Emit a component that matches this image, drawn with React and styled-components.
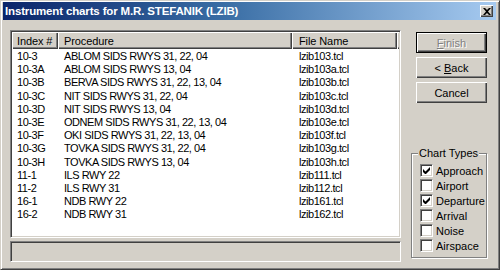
import React from "react";
import styled, { createGlobalStyle } from "styled-components";

const Global = createGlobalStyle`
  html, body { margin: 0; padding: 0; background: #d4d0c8; }
  body { font-family: "Liberation Sans", Arial, sans-serif; font-size: 11px; color: #000; }
`;

const Window = styled.div`
  width: 500px;
  height: 270px;
  box-sizing: border-box;
  background: #d4d0c8;
  border: 1px solid;
  border-color: #d4d0c8 #404040 #404040 #d4d0c8;
  box-shadow: inset 1px 1px 0 #fff, inset -1px -1px 0 #808080;
  padding: 1px 3px 0 2px;
  display: flex;
  flex-direction: column;
  overflow: hidden;
`;

const TitleBar = styled.div`
  height: 18px;
  background: linear-gradient(to right, #0a246a 0%, #3a6ea5 45%, #a6caf0 100%);
  display: flex;
  align-items: center;
  justify-content: space-between;
  padding: 0 3px 0 2px;
`;

const Title = styled.div`
  color: #fff;
  font-weight: bold;
  font-size: 11.5px;
  letter-spacing: -0.15px;
`;

const CloseBtn = styled.div`
  width: 13px;
  height: 12px;
  background: #d4d0c8;
  box-shadow: inset 1px 1px 0 #fff, inset -1px -1px 0 #404040, inset -2px -2px 0 #808080;
  display: flex;
  align-items: center;
  justify-content: center;
`;

const Body = styled.div`
  flex: 1;
  display: flex;
  padding: 10px 9px 7px 7px;
  gap: 10px;
`;

const LeftCol = styled.div`
  width: 392px;
  display: flex;
  flex-direction: column;
  gap: 3px;
`;

const List = styled.div`
  height: 208px;
  box-sizing: border-box;
  background: #fff;
  border: 1px solid;
  border-color: #808080 #fff #fff #808080;
  box-shadow: inset 1px 1px 0 #404040, inset -1px -1px 0 #d4d0c8;
  padding: 1px;
  display: flex;
  flex-direction: column;
`;

const Header = styled.div`
  display: flex;
  height: 17px;
  background: #d4d0c8;
`;

const HeaderCell = styled.div`
  width: ${(p) => p.$w}px;
  box-sizing: border-box;
  padding-left: ${(p) => p.$pad}px;
  display: flex;
  align-items: center;
  box-shadow: inset 1px 1px 0 #fff, inset -1px -1px 0 #404040, inset -2px -2px 0 #808080;
  white-space: nowrap;
  letter-spacing: -0.1px;
`;

const HeaderRest = styled.div`
  flex: 1;
  box-shadow: inset 1px 1px 0 #fff, inset 0 -1px 0 #404040, inset 0 -2px 0 #808080;
`;

const Rows = styled.div`
  padding-top: 0.5px;
`;

const Row = styled.div`
  display: flex;
  height: 13.2px;
  align-items: center;
  white-space: nowrap;
`;

const Cell = styled.div`
  width: ${(p) => p.$w}px;
  box-sizing: border-box;
  padding-left: ${(p) => p.$pad}px;
  letter-spacing: -0.45px;
`;

const Status = styled.div`
  height: 21px;
  box-sizing: border-box;
  border: 1px solid;
  border-color: #808080 #fff #fff #808080;
  box-shadow: inset 1px 1px 0 #404040;
`;

const RightCol = styled.div`
  width: 76px;
  display: flex;
  flex-direction: column;
  align-items: flex-end;
  padding: 2px 0 4px;
`;

const Button = styled.div`
  width: 71px;
  height: 21px;
  box-sizing: border-box;
  margin-bottom: 4px;
  background: #d4d0c8;
  display: flex;
  align-items: center;
  justify-content: center;
  color: ${(p) => (p.$disabled ? "#808080" : "#000")};
  text-shadow: ${(p) => (p.$disabled ? "1px 1px 0 #fff" : "none")};
  border: ${(p) => (p.$default ? "1px solid #000" : "none")};
  box-shadow: inset 1px 1px 0 #fff, inset -1px -1px 0 #404040, inset -2px -2px 0 #808080;
  u { text-decoration: underline; }
`;

const Group = styled.div`
  margin-top: auto;
  width: 76px;
  height: 105px;
  box-sizing: border-box;
  border: 1px solid #808080;
  box-shadow: 1px 1px 0 #fff, inset 1px 1px 0 #fff;
  padding: 0 0 0 8px;
  display: flex;
  flex-direction: column;
  align-items: flex-start;
`;

const Legend = styled.span`
  margin: -7px 0 3px -2px;
  padding: 0 1px;
  line-height: 13px;
  background: #d4d0c8;
`;

const CheckRow = styled.label`
  display: flex;
  align-items: center;
  height: 15px;
  gap: 3px;
`;

const Box = styled.span`
  width: 13px;
  height: 13px;
  box-sizing: border-box;
  background: #fff;
  border: 1px solid;
  border-color: #808080 #fff #fff #808080;
  box-shadow: inset 1px 1px 0 #404040, inset -1px -1px 0 #d4d0c8;
  display: flex;
  align-items: center;
  justify-content: center;
`;

const rows = [
  ["10-3", "ABLOM SIDS RWYS 31, 22, 04", "lzib103.tcl"],
  ["10-3A", "ABLOM SIDS RWYS 13, 04", "lzib103a.tcl"],
  ["10-3B", "BERVA SIDS RWYS 31, 22, 13, 04", "lzib103b.tcl"],
  ["10-3C", "NIT SIDS RWYS 31, 22, 04", "lzib103c.tcl"],
  ["10-3D", "NIT SIDS RWYS 13, 04", "lzib103d.tcl"],
  ["10-3E", "ODNEM SIDS RWYS 31, 22, 13, 04", "lzib103e.tcl"],
  ["10-3F", "OKI SIDS RWYS 31, 22, 13, 04", "lzib103f.tcl"],
  ["10-3G", "TOVKA SIDS RWYS 31, 22, 04", "lzib103g.tcl"],
  ["10-3H", "TOVKA SIDS RWYS 13, 04", "lzib103h.tcl"],
  ["11-1", "ILS RWY 22", "lzib111.tcl"],
  ["11-2", "ILS RWY 31", "lzib112.tcl"],
  ["16-1", "NDB RWY 22", "lzib161.tcl"],
  ["16-2", "NDB RWY 31", "lzib162.tcl"],
];

const types = [
  ["Approach", true],
  ["Airport", false],
  ["Departure", true],
  ["Arrival", false],
  ["Noise", false],
  ["Airspace", false],
];

const Check = () => (
  <svg width="7" height="7" viewBox="0 0 7 7">
    <path d="M0 2v3l2 2h1l4-4V0L2.5 4.5z" fill="#000" />
  </svg>
);

export default function App() {
  return (
    <>
      <Global />
      <Window>
        <TitleBar>
          <Title>Instrument charts for M.R. STEFANIK (LZIB)</Title>
          <CloseBtn>
            <svg width="8" height="7" viewBox="0 0 8 7">
              <path d="M0 0h2l2 2 2-2h2L5 3.5 8 7H6L4 5 2 7H0l3-3.5z" fill="#000" />
            </svg>
          </CloseBtn>
        </TitleBar>
        <Body>
          <LeftCol>
            <List>
              <Header>
                <HeaderCell $w={46} $pad={5}>Index #</HeaderCell>
                <HeaderCell $w={234} $pad={6}>Procedure</HeaderCell>
                <HeaderCell $w={105} $pad={7}>File Name</HeaderCell>
                <HeaderRest />
              </Header>
              <Rows>
                {rows.map((r) => (
                  <Row key={r[0]}>
                    <Cell $w={46} $pad={5}>{r[0]}</Cell>
                    <Cell $w={234} $pad={6}>{r[1]}</Cell>
                    <Cell $w={105} $pad={7}>{r[2]}</Cell>
                  </Row>
                ))}
              </Rows>
            </List>
            <Status />
          </LeftCol>
          <RightCol>
            <Button $default $disabled><span><u>F</u>inish</span></Button>
            <Button><span>&lt; <u>B</u>ack</span></Button>
            <Button>Cancel</Button>
            <Group>
              <Legend>Chart Types</Legend>
              {types.map(([name, on]) => (
                <CheckRow key={name}>
                  <Box>{on && <Check />}</Box>
                  {name}
                </CheckRow>
              ))}
            </Group>
          </RightCol>
        </Body>
      </Window>
    </>
  );
}
